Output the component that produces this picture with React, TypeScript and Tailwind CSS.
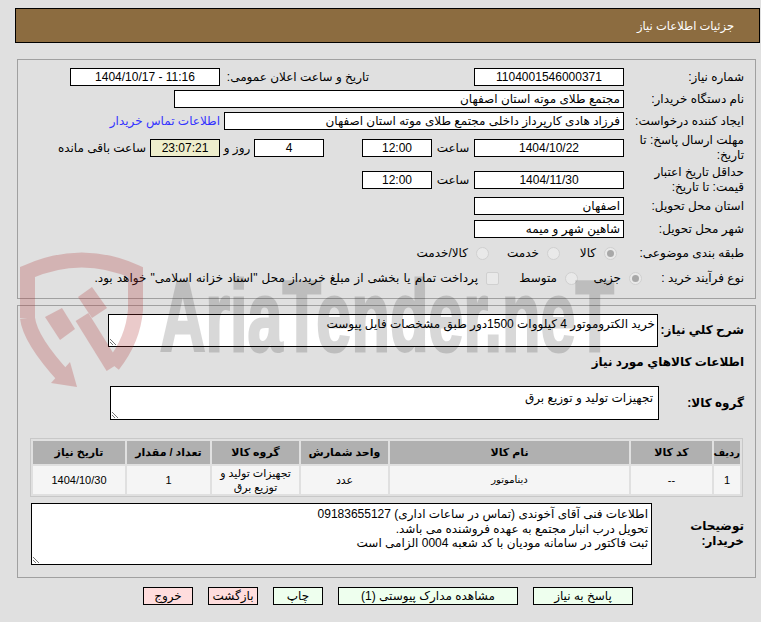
import React from 'react';

const Field: React.FC<{ w: string; center?: boolean; bg?: string; children?: React.ReactNode }> = ({ w, center, bg, children }) => (
  <div className={`${w} h-[18px] shrink-0 border border-black ${bg || 'bg-white'} flex items-center overflow-hidden whitespace-nowrap ${center ? 'justify-center' : 'pr-[3px]'}`}>
    {children}
  </div>
);

const Label: React.FC<{ w: string; bold?: boolean; children: React.ReactNode }> = ({ w, bold, children }) => (
  <div className={`${w} shrink-0 leading-[15px] ${bold ? 'font-bold' : ''}`}>{children}</div>
);

const Radio: React.FC<{ checked?: boolean }> = ({ checked }) => (
  <span className="w-[13px] h-[13px] shrink-0 rounded-full bg-[#e9e9e9] border border-[#d0d0d0] flex items-center justify-center">
    {checked && <span className="w-[7px] h-[7px] rounded-full bg-[#a8a8a8]" />}
  </span>
);

const Handle = () => (
  <svg className="absolute left-0 bottom-0" width="9" height="9" viewBox="0 0 9 9">
    <path d="M1 2L7 8M1 5L4 8" stroke="#777" strokeWidth="1" fill="none" />
  </svg>
);

const Btn: React.FC<{ w: string; bg: string; children: React.ReactNode }> = ({ w, bg, children }) => (
  <div className={`${w} ${bg} h-[18px] border border-black flex items-center justify-center whitespace-nowrap`}>{children}</div>
);

const Watermark = () => (
  <div className="absolute inset-0 pointer-events-none overflow-hidden" dir="ltr">
    <svg className="absolute left-0 top-0" width="200" height="400" viewBox="0 0 200 400">
      <g opacity="0.25">
        <path d="M27.5 318V272Q82 248 135.5 272V310Q133 340 113 365" fill="none" stroke="#b03030" strokeWidth="15" />
        <path d="M27.5 318Q30 340 65 378" fill="none" stroke="#b03030" strokeWidth="15" />
        <path d="M113 367L82 317" fill="none" stroke="#b03030" strokeWidth="15" />
        <polygon points="70,362 77,387 51,383" fill="#b03030" />
        <polygon points="45,317 62,308 75,329 60,340" fill="#b03030" />
        <polygon points="78,297 92,287 107,308 92,318" fill="#b03030" />
      </g>
    </svg>
    <div className="absolute left-[160px] top-[266px] opacity-15 text-[100px] leading-none font-bold text-black [-webkit-text-stroke:3px_black] whitespace-nowrap origin-left scale-x-[0.63] font-['Liberation_Sans',sans-serif]">
      AriaTender.neT
    </div>
  </div>
);

export default function App() {
  return (
    <div dir="rtl" className="relative h-[622px] w-[761px] overflow-hidden bg-[#e0e0e0] pt-[8px] pl-[15px] pr-[1px] text-[12px] text-black font-['Liberation_Sans','DejaVu_Sans',sans-serif]">
      <div className="h-[35px] bg-[#8c6c40] border border-black flex items-center pr-[25px] pt-[3px] text-white text-[11.5px]">
        جزئیات اطلاعات نیاز
      </div>

      <div className="mt-[16px] ml-[2px] mr-[4px] h-[240px] border border-[#a0a0a0] pt-[8px] pr-[11px]">
        <div className="flex items-center h-[18px]">
          <Label w="w-[120px]">شماره نیاز:</Label>
          <Field w="w-[150px]" center>1104001546000371</Field>
          <div className="w-[105px] shrink-0" />
          <Label w="w-[149px]">تاریخ و ساعت اعلان عمومی:</Label>
          <Field w="w-[150px]" center>11:16 - 1404/10/17</Field>
        </div>
        <div className="flex items-center h-[18px] mt-[4px]">
          <Label w="w-[120px]">نام دستگاه خریدار:</Label>
          <Field w="w-[450px]">مجتمع طلای موته استان اصفهان</Field>
        </div>
        <div className="flex items-center h-[18px] mt-[4px]">
          <Label w="w-[120px]">ایجاد کننده درخواست:</Label>
          <Field w="w-[400px]">فرزاد هادی کارپرداز داخلی مجتمع طلای موته استان اصفهان</Field>
          <a className="mr-[4px] text-[#3333ff] whitespace-nowrap">اطلاعات تماس خریدار</a>
        </div>
        <div className="flex items-center h-[18px] mt-[9px]">
          <Label w="w-[120px]">مهلت ارسال پاسخ: تا تاریخ:</Label>
          <Field w="w-[150px]" center>1404/10/22</Field>
          <div className="w-[42px] shrink-0 text-center">ساعت</div>
          <Field w="w-[70px]" center>12:00</Field>
          <div className="w-[38px] shrink-0" />
          <Field w="w-[70px]" center>4</Field>
          <div className="w-[34px] shrink-0 text-center">روز و</div>
          <Field w="w-[70px]" center bg="bg-[#eeeecc]">23:07:21</Field>
          <div className="mr-[4px] whitespace-nowrap">ساعت باقی مانده</div>
        </div>
        <div className="flex items-center h-[18px] mt-[14px]">
          <Label w="w-[120px]">حداقل تاریخ اعتبار قیمت: تا تاریخ:</Label>
          <Field w="w-[150px]" center>1404/11/30</Field>
          <div className="w-[42px] shrink-0 text-center">ساعت</div>
          <Field w="w-[70px]" center>12:00</Field>
        </div>
        <div className="flex items-center h-[18px] mt-[8px]">
          <Label w="w-[120px]">استان محل تحویل:</Label>
          <Field w="w-[150px]">اصفهان</Field>
        </div>
        <div className="flex items-center h-[18px] mt-[5px]">
          <Label w="w-[120px]">شهر محل تحویل:</Label>
          <Field w="w-[150px]">شاهین شهر و میمه</Field>
        </div>
        <div className="flex items-center h-[18px] mt-[6px]">
          <Label w="w-[127px]">طبقه بندی موضوعی:</Label>
          <Radio checked />
          <span className="w-[44px] shrink-0 pr-[8px]">کالا</span>
          <Radio />
          <span className="w-[58px] shrink-0 pr-[8px]">خدمت</span>
          <Radio />
          <span className="pr-[8px]">کالا/خدمت</span>
        </div>
        <div className="flex items-center h-[18px] mt-[7px]">
          <Label w="w-[102px]">نوع فرآیند خرید :</Label>
          <Radio checked />
          <span className="w-[51px] shrink-0 pr-[8px]">جزیی</span>
          <Radio />
          <span className="w-[66px] shrink-0 pr-[8px]">متوسط</span>
          <span className="w-[13px] h-[13px] shrink-0 rounded-[2px] bg-[#e9e9e9] border border-[#d0d0d0]" />
          <span className="pr-[8px] whitespace-nowrap [word-spacing:0.8px]">پرداخت تمام یا بخشی از مبلغ خرید،از محل "اسناد خزانه اسلامی" خواهد بود.</span>
        </div>
      </div>

      <div className="mt-[6px] ml-[2px] mr-[4px] h-[273px] border border-[#a0a0a0] pt-[8px] pr-[11px]">
        <div className="flex items-center">
          <Label w="w-[86px]" bold>شرح کلي نیاز:</Label>
          <div className="relative w-[550px] h-[33px] border border-black bg-white pr-[2px] leading-[18px]">
            خرید الکتروموتور 4 کیلووات 1500دور طبق مشخصات فایل پیوست
            <Handle />
          </div>
        </div>
        <div className="mt-[7px] h-[16px] font-bold leading-[16px]">اطلاعات کالاهاي مورد نیاز</div>
        <div className="flex items-center mt-[16px]">
          <Label w="w-[85px]" bold>گروه کالا:</Label>
          <div className="relative w-[549px] h-[34px] border border-black bg-white pr-[5px] leading-[22px]">
            تجهیزات تولید و توزیع برق
            <Handle />
          </div>
        </div>

        <table dir="rtl" className="mt-[18px] mr-[1px] w-[713px] table-fixed border-separate border-spacing-[2px] border border-[#c8c8c8] text-center text-[11px]">
          <colgroup>
            <col className="w-[26px]" />
            <col className="w-[81px]" />
            <col className="w-[239px]" />
            <col className="w-[87px]" />
            <col className="w-[87px]" />
            <col className="w-[83px]" />
            <col className="w-[92px]" />
          </colgroup>
          <thead>
            <tr className="h-[23px] bg-[#b0b0b0] font-bold">
              <th className="text-[10px]">ردیف</th>
              <th>کد کالا</th>
              <th>نام کالا</th>
              <th>واحد شمارش</th>
              <th>گروه کالا</th>
              <th>تعداد / مقدار</th>
              <th>تاریخ نیاز</th>
            </tr>
          </thead>
          <tbody>
            <tr className="h-[28px] bg-[#f5f5f5] leading-[14px]">
              <td>1</td>
              <td>--</td>
              <td className="text-[10px]">دیناموتور</td>
              <td>عدد</td>
              <td>تجهیزات تولید و توزیع برق</td>
              <td>1</td>
              <td>1404/10/30</td>
            </tr>
          </tbody>
        </table>

        <div className="flex items-center mt-[6px]">
          <Label w="w-[92px]" bold>توضیحات خریدار:</Label>
          <div className="relative w-[621px] h-[62px] border border-black bg-white pr-[3px] pt-[3px] leading-[14.5px]">
            <div>اطلاعات فنی آقای آخوندی (تماس در ساعات اداری) 09183655127</div>
            <div>تحویل درب انبار مجتمع به عهده فروشنده می باشد.</div>
            <div>ثبت فاکتور در سامانه مودیان با کد شعبه 0004 الزامی است</div>
            <Handle />
          </div>
        </div>
      </div>

      <div className="mt-[9px] flex gap-[15px] pr-[127px]">
        <Btn w="w-[100px]" bg="bg-[#eeffee]">پاسخ به نیاز</Btn>
        <Btn w="w-[180px]" bg="bg-[#eeffee]">مشاهده مدارک پیوستی (1)</Btn>
        <Btn w="w-[50px]" bg="bg-[#eeffee]">چاپ</Btn>
        <Btn w="w-[50px]" bg="bg-[#ffdddd]">بازگشت</Btn>
        <Btn w="w-[50px]" bg="bg-[#ffdddd]">خروج</Btn>
      </div>

      <Watermark />
    </div>
  );
}
